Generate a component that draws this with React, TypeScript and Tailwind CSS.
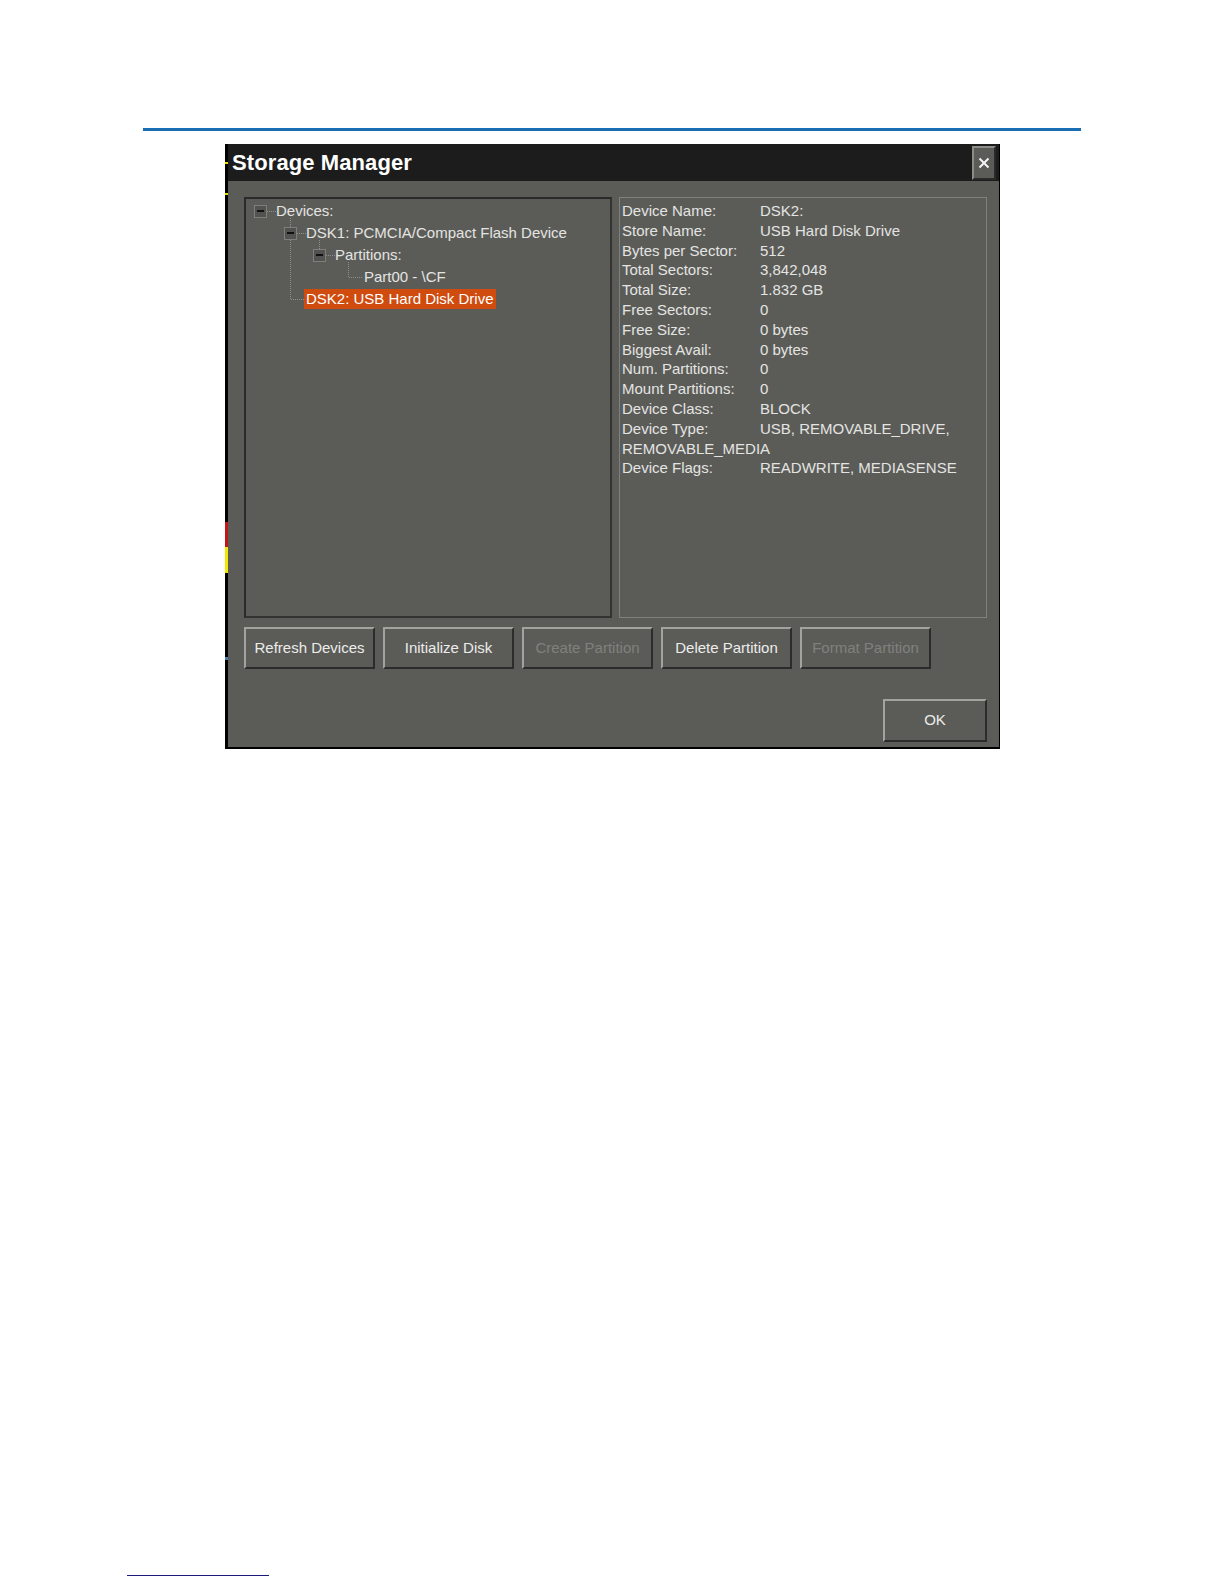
import React from 'react'

type InfoRow = { label: string; value?: string; wrap?: boolean }

const info: InfoRow[] = [
  { label: 'Device Name:', value: 'DSK2:' },
  { label: 'Store Name:', value: 'USB Hard Disk Drive' },
  { label: 'Bytes per Sector:', value: '512' },
  { label: 'Total Sectors:', value: '3,842,048' },
  { label: 'Total Size:', value: '1.832 GB' },
  { label: 'Free Sectors:', value: '0' },
  { label: 'Free Size:', value: '0 bytes' },
  { label: 'Biggest Avail:', value: '0 bytes' },
  { label: 'Num. Partitions:', value: '0' },
  { label: 'Mount Partitions:', value: '0' },
  { label: 'Device Class:', value: 'BLOCK' },
  { label: 'Device Type:', value: 'USB, REMOVABLE_DRIVE,' },
  { label: 'REMOVABLE_MEDIA', wrap: true },
  { label: 'Device Flags:', value: 'READWRITE, MEDIASENSE' },
]

type TreeRow = { label: string; pad: string; box: boolean; selected?: boolean }

const tree: TreeRow[] = [
  { label: 'Devices:', pad: 'pl-[8px]', box: true },
  { label: 'DSK1: PCMCIA/Compact Flash Device', pad: 'pl-[38px]', box: true },
  { label: 'Partitions:', pad: 'pl-[67px]', box: true },
  { label: 'Part00 - \\CF', pad: 'pl-[96px]', box: false },
  { label: 'DSK2: USB Hard Disk Drive', pad: 'pl-[38px]', box: false, selected: true },
]

const buttons = [
  { label: 'Refresh Devices' },
  { label: 'Initialize Disk' },
  { label: 'Create Partition', disabled: true },
  { label: 'Delete Partition' },
  { label: 'Format Partition', disabled: true },
]

function TreeBox() {
  return (
    <span className="flex h-[13px] w-[13px] shrink-0 items-center justify-center border border-[#7e7f7b] bg-[#525350]">
      <span className="h-[2px] w-[7px] bg-[#111]" />
    </span>
  )
}

function Btn({ label, disabled, size = 'h-[42px] w-[131px]' }: { label: string; disabled?: boolean; size?: string }) {
  return (
    <button
      className={`flex ${size} items-center justify-center border-2 border-t-[#a2a39f] border-l-[#a2a39f] border-b-[#2c2c2c] border-r-[#2c2c2c] bg-[#5b5c58] text-[15px] ${
        disabled ? 'text-[#80817d]' : 'text-[#ececea]'
      }`}
    >
      {label}
    </button>
  )
}

// tree connector lines (dotted), coords relative to the tree panel's padding box
function TreeLines() {
  const lines = [
    [21, 12.5, 30, 12.5],
    [51, 34.5, 60, 34.5],
    [80, 56.5, 89, 56.5],
    [44.5, 19, 44.5, 28],
    [44.5, 41, 44.5, 100],
    [44.5, 100.5, 58, 100.5],
    [73.5, 41, 73.5, 50],
    [102.5, 63, 102.5, 78],
    [102.5, 78.5, 116, 78.5],
  ]
  return (
    <svg className="pointer-events-none absolute inset-0" width="364" height="417">
      {lines.map(([x1, y1, x2, y2], i) => (
        <line
          key={i}
          x1={x1}
          y1={y1}
          x2={x2}
          y2={y2}
          stroke="#8f908c"
          strokeWidth={1}
          strokeDasharray="1 1"
          shapeRendering="crispEdges"
        />
      ))}
    </svg>
  )
}

export default function App() {
  return (
    <div className="flex h-[1584px] w-[1224px] flex-col bg-white font-['Liberation_Sans',Arial,sans-serif]">
      {/* top rule */}
      <div className="ml-[143px] mt-[128px] h-[3px] w-[938px] bg-[#1a6eb4]" />

      {/* dialog */}
      <div className="ml-[225px] mt-[13px] flex h-[605px] w-[775px]">
        {/* left edge of the screen capture */}
        <div className="flex w-[3px] shrink-0 flex-col bg-black">
          <div className="h-[18px]" />
          <div className="h-[2px] bg-[#e8e000]" />
          <div className="h-[29px]" />
          <div className="h-[2px] bg-[#e8e000]" />
          <div className="h-[327px]" />
          <div className="h-[25px] bg-[#c01818]" />
          <div className="h-[26px] bg-[#f0e800]" />
          <div className="h-[84px]" />
          <div className="h-[3px] bg-[#4a78b0]" />
        </div>

        <div className="flex flex-1 flex-col border-b-2 border-r border-black">
          {/* title bar */}
          <div className="flex h-[37px] shrink-0 items-center justify-between bg-[#1c1c1c] pl-[4px] pr-[3px]">
            <span className="text-[22px] font-bold tracking-[0.1px] text-white">Storage Manager</span>
            <div className="flex h-[34px] w-[24px] items-center justify-center border-2 border-t-[#8c8d89] border-l-[#8c8d89] border-b-[#2a2a2a] border-r-[#2a2a2a] bg-[#5b5c58]">
              <svg width="12" height="12" viewBox="0 0 12 12">
                <path d="M1.5 1.5 L10.5 10.5 M10.5 1.5 L1.5 10.5" stroke="#f4f4f4" strokeWidth="2" />
              </svg>
            </div>
          </div>

          {/* body */}
          <div className="flex flex-1 flex-col bg-[#5b5c58] pl-[16px] pr-[12px] pt-[16px]">
            <div className="flex h-[421px] gap-[7px]">
              {/* tree */}
              <div className="relative w-[368px] border-2 border-t-[#2a2a2a] border-l-[#2a2a2a] border-b-[#333331] border-r-[#333331] pt-[1px] text-[15px] text-[#e4e4e2]">
                {tree.map((r) => (
                  <div key={r.label} className={`flex h-[22px] items-center ${r.pad}`}>
                    {r.box ? <TreeBox /> : <span className="w-[13px] shrink-0" />}
                    <span className="w-[9px] shrink-0" />
                    {r.selected ? (
                      <span className="-ml-[2px] h-[20px] bg-[#cf4b0e] px-[2px] leading-[20px] text-white">{r.label}</span>
                    ) : (
                      <span className="whitespace-nowrap">{r.label}</span>
                    )}
                  </div>
                ))}
                <TreeLines />
              </div>

              {/* properties */}
              <div className="w-[368px] border border-[#80817d] pl-[2px] pt-[3px] text-[15px] leading-[19.8px] text-[#e4e4e2]">
                {info.map((r) =>
                  r.wrap ? (
                    <div key={r.label}>{r.label}</div>
                  ) : (
                    <div key={r.label} className="flex whitespace-nowrap">
                      <span className="w-[138px] shrink-0">{r.label}</span>
                      <span>{r.value}</span>
                    </div>
                  )
                )}
              </div>
            </div>

            <div className="mt-[9px] flex gap-[8px]">
              {buttons.map((b) => (
                <Btn key={b.label} label={b.label} disabled={b.disabled} />
              ))}
            </div>

            <div className="mt-[30px] flex justify-end">
              <Btn label="OK" size="h-[43px] w-[104px]" />
            </div>
          </div>
        </div>
      </div>

      {/* footnote rule */}
      <div className="ml-[127px] mt-[826px] h-[1px] w-[142px] bg-[#1a1a7c]" />
    </div>
  )
}
